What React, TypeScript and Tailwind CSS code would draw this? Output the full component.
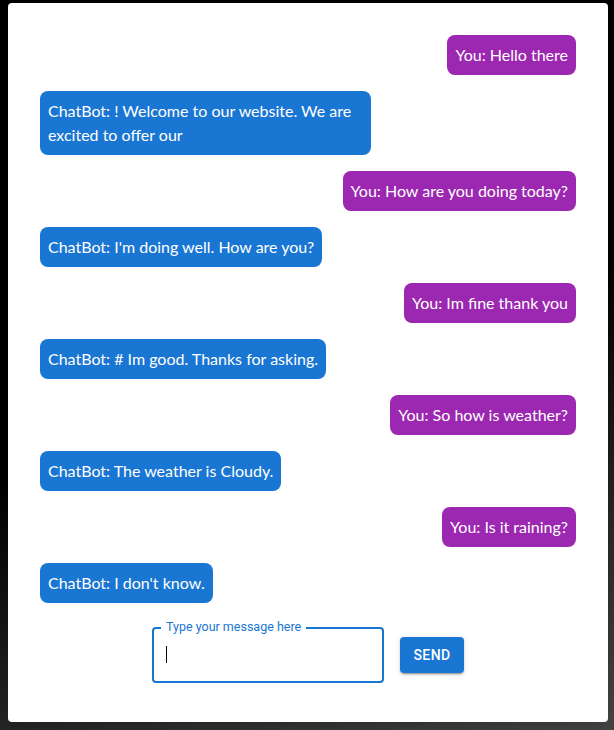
const messages: { from: 'user' | 'bot'; text: string }[] = [
  { from: 'user', text: 'You: Hello there' },
  { from: 'bot', text: 'ChatBot: ! Welcome to our website. We are excited to offer our' },
  { from: 'user', text: 'You: How are you doing today?' },
  { from: 'bot', text: "ChatBot: I'm doing well. How are you?" },
  { from: 'user', text: 'You: Im fine thank you' },
  { from: 'bot', text: 'ChatBot: # Im good. Thanks for asking.' },
  { from: 'user', text: 'You: So how is weather?' },
  { from: 'bot', text: 'ChatBot: The weather is Cloudy.' },
  { from: 'user', text: 'You: Is it raining?' },
  { from: 'bot', text: "ChatBot: I don't know." },
];

export default function App() {
  return (
    <div className="min-h-[730px] bg-[linear-gradient(160deg,#000_50%,#454545_100%)] px-2 pt-[3px] pb-2">
      <div className="w-[600px] h-[719px] bg-white rounded shadow-lg px-8 pt-8 flex flex-col">
        <div className="flex flex-col gap-4 font-['Lato','Noto_Sans',sans-serif] text-[16px] leading-6 text-white">
          {messages.map((m, i) => (
            <div key={i} className={m.from === 'user' ? 'flex justify-end' : 'flex justify-start'}>
              <div
                className={
                  m.from === 'user'
                    ? 'bg-[#9c27b0] rounded-lg px-2 py-2 max-w-[331px]'
                    : 'bg-[#1976d2] rounded-lg px-2 py-2 max-w-[331px]'
                }
              >
                {m.text}
              </div>
            </div>
          ))}
        </div>
        <div className="flex items-center justify-center gap-4 mt-6 font-['Roboto',sans-serif]">
          <div className="relative w-[232px] h-[56px] border-2 border-[#1976d2] rounded">
            <label className="absolute -top-[10px] left-[7px] px-[5px] bg-white text-[12.5px] leading-4 text-[#1976d2]">
              Type your message here
            </label>
            <input
              autoFocus
              className="w-full h-full px-3 outline-none bg-transparent text-[16px] text-black caret-black"
            />
            <span className="absolute left-3 top-[17px] w-px h-[17px] bg-black" />
          </div>
          <button className="w-16 h-9 bg-[#1976d2] text-white text-[14px] font-medium tracking-[0.4px] rounded shadow-[0_3px_1px_-2px_rgba(0,0,0,0.2),0_2px_2px_0_rgba(0,0,0,0.14),0_1px_5px_0_rgba(0,0,0,0.12)]">
            SEND
          </button>
        </div>
      </div>
    </div>
  );
}
